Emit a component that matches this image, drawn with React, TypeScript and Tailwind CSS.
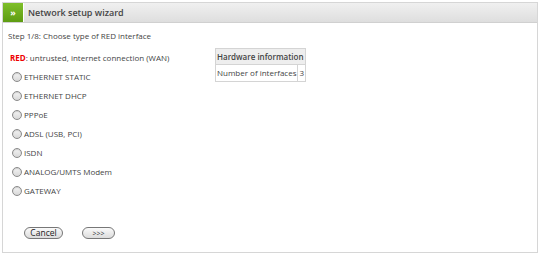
const options = [
  'ETHERNET STATIC',
  'ETHERNET DHCP',
  'PPPoE',
  'ADSL (USB, PCI)',
  'ISDN',
  'ANALOG/UMTS Modem',
  'GATEWAY',
];

function Radio({ label }: { label: string }) {
  return (
    <label className="flex items-center h-[19px] gap-[2px]">
      <span className="w-[10px] h-[10px] rounded-full border border-[#8a8a8a] bg-gradient-to-b from-[#f4f4f4] to-[#d8d8d8] shadow-[inset_0_1px_1px_rgba(0,0,0,0.15)]" />
      <span>{label}</span>
    </label>
  );
}

export default function App() {
  return (
    <div className="w-[540px] h-[255px] bg-white p-[2px] text-[8px] text-[#444] font-['Lucida_Grande','Open_Sans',sans-serif]">
      <div className="h-[251px] border border-[#d6d6d6] flex flex-col">
        {/* header */}
        <div className="flex h-[20px] bg-gradient-to-b from-[#f0f0f0] to-[#dedede] border-b border-[#d0d0d0]">
          <div className="w-[20px] bg-gradient-to-b from-[#7fbf2a] to-[#5e9c12] text-white text-[9px] font-bold flex items-center justify-center">
            »
          </div>
          <div className="pl-[4px] flex items-center text-[9px] font-semibold text-[#444] border-l border-[#fff]">
            Network setup wizard
          </div>
        </div>

        <div className="px-[5px] pt-[7px]">Step 1/8: Choose type of RED interface</div>

        <div className="flex mt-[10px]">
          <div className="w-[212px] pl-[7px]">
            <div className="mb-[3px]">
              <span className="text-[#e00] font-bold">RED</span>: untrusted, internet connection (WAN)
            </div>
            <div className="flex flex-col pl-[2px]">
              {options.map((o) => (
                <Radio key={o} label={o} />
              ))}
            </div>
          </div>

          <table className="border-collapse h-fit mt-[-4px]">
            <thead>
              <tr>
                <th colSpan={2} className="bg-[#eeeeee] border border-[#d4d4d4] text-left font-semibold px-[1px] h-[16px]">
                  Hardware information
                </th>
              </tr>
            </thead>
            <tbody>
              <tr>
                <td className="border border-[#d4d4d4] px-[1px] h-[17px]">Number of interfaces</td>
                <td className="border border-[#d4d4d4] px-[1px]">3</td>
              </tr>
            </tbody>
          </table>
        </div>

        <div className="flex gap-[19px] pl-[21px] mt-[27px]">
          <button className="h-[12px] w-[39px] rounded-full border border-[#777] bg-gradient-to-b from-[#fafafa] to-[#dcdcdc] text-[8.5px] leading-none text-[#222]">
            Cancel
          </button>
          <button className="h-[12px] w-[33px] rounded-full border border-[#777] bg-gradient-to-b from-[#fafafa] to-[#dcdcdc] text-[7px] leading-none text-[#333]">
            &gt;&gt;&gt;
          </button>
        </div>
      </div>
    </div>
  );
}
